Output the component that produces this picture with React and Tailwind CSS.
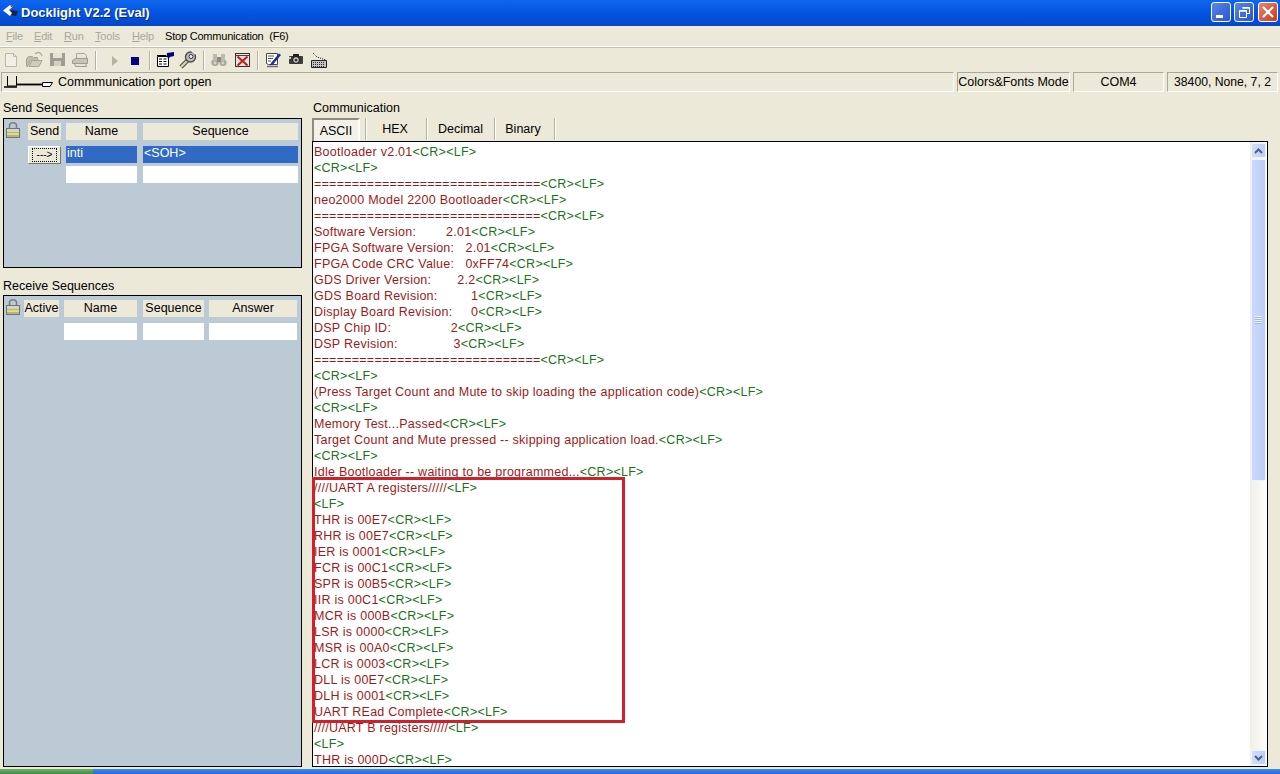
const R = "text-[#9c1a1a]";
const G = "text-[#187418]";

const LINES = [
  ["Bootloader v2.01", "<CR><LF>"],
  ["", "<CR><LF>"],
  ["==============================", "<CR><LF>"],
  ["neo2000 Model 2200 Bootloader", "<CR><LF>"],
  ["==============================", "<CR><LF>"],
  ["Software Version:        2.01", "<CR><LF>"],
  ["FPGA Software Version:   2.01", "<CR><LF>"],
  ["FPGA Code CRC Value:   0xFF74", "<CR><LF>"],
  ["GDS Driver Version:       2.2", "<CR><LF>"],
  ["GDS Board Revision:         1", "<CR><LF>"],
  ["Display Board Revision:     0", "<CR><LF>"],
  ["DSP Chip ID:                2", "<CR><LF>"],
  ["DSP Revision:               3", "<CR><LF>"],
  ["==============================", "<CR><LF>"],
  ["", "<CR><LF>"],
  ["(Press Target Count and Mute to skip loading the application code)", "<CR><LF>"],
  ["", "<CR><LF>"],
  ["Memory Test...Passed", "<CR><LF>"],
  ["Target Count and Mute pressed -- skipping application load.", "<CR><LF>"],
  ["", "<CR><LF>"],
  ["Idle Bootloader -- waiting to be programmed...", "<CR><LF>"],
  ["////UART A registers/////", "<LF>"],
  ["", "<LF>"],
  ["THR is 00E7", "<CR><LF>"],
  ["RHR is 00E7", "<CR><LF>"],
  ["IER is 0001", "<CR><LF>"],
  ["FCR is 00C1", "<CR><LF>"],
  ["SPR is 00B5", "<CR><LF>"],
  ["IIR is 00C1", "<CR><LF>"],
  ["MCR is 000B", "<CR><LF>"],
  ["LSR is 0000", "<CR><LF>"],
  ["MSR is 00A0", "<CR><LF>"],
  ["LCR is 0003", "<CR><LF>"],
  ["DLL is 00E7", "<CR><LF>"],
  ["DLH is 0001", "<CR><LF>"],
  ["UART REad Complete", "<CR><LF>"],
  ["////UART B registers/////", "<LF>"],
  ["", "<LF>"],
  ["THR is 000D", "<CR><LF>"],
];

function Lock() {
  return (
    <svg width="14" height="16" viewBox="0 0 14 16" className="block">
      <path d="M3.5 6.5V4C3.5 2 5 .8 7 .8S10.5 2 10.5 4v2.5" fill="none" stroke="#7e7e78" strokeWidth="1.6" />
      <rect x=".5" y="6.5" width="13" height="9" fill="#b0b0a8" stroke="#74746c" />
      <rect x="1" y="7" width="12" height="3" fill="#d4d4cc" />
      <rect x="1" y="11" width="12" height="2" fill="#e4e44c" />
    </svg>
  );
}

function HCell({ w, children }) {
  return (
    <div className={`${w} h-[17px] bg-[#ece9d8] flex items-center justify-center text-black whitespace-nowrap`}>{children}</div>
  );
}

function Icon({ children, w = 23 }) {
  return (
    <svg width={w} height="20" viewBox={`0 0 ${w} 20`} className="shrink-0 block">
      {children}
    </svg>
  );
}

const Sep = () => <div className="w-[1px] h-[19px] ml-[3px] mr-[1px] bg-[#b4b1a2] [box-shadow:1px_0_0_#fff]" />;

function Toolbar() {
  return (
    <div className="h-[24px] shrink-0 flex items-center">
      <Icon>
        <path d="M5.5 3.5h8l3 3v10h-11z" fill="#f2f0e4" stroke="#bab8aa" />
        <path d="M13.5 3.5v3h3" fill="none" stroke="#bab8aa" />
      </Icon>
      <Icon>
        <path d="M3.5 8.5l2-2h4l1 1h4v3h-7l-3 6h-1z" fill="#bdbbac" stroke="#a8a698" />
        <path d="M6 16.5l3-6h10l-3 6z" fill="#cfcdbe" stroke="#a8a698" />
        <path d="M12 4c2-2 5-2 6 0l1 2" fill="none" stroke="#b0ae9f" strokeWidth="1.4" />
      </Icon>
      <Icon>
        <rect x="4" y="3" width="15" height="13" fill="#a09e91" />
        <rect x="7" y="3" width="9" height="5" fill="#e6e4d8" />
        <rect x="8" y="11" width="7" height="5" fill="#d2d0c2" />
      </Icon>
      <Icon>
        <path d="M7.5 3.5h8l2 2v4h-10z" fill="#e9e7da" stroke="#a8a698" />
        <path d="M3.5 10.5l3-2h12v5h-15z" fill="#c6c4b6" stroke="#9e9c8e" />
        <path d="M5.5 13.5h11l1 3h-11z" fill="#e4e2d6" stroke="#a09e90" />
      </Icon>
      <Sep />
      <Icon w={26}>
        <path d="M15 6l6 5-6 5z" fill="#b5b3a6" />
      </Icon>
      <Icon>
        <rect x="8" y="7" width="8" height="8" fill="#000080" />
      </Icon>
      <Sep />
      <Icon w={26}>
        <path d="M6.5 6.5h11v10h-11z" fill="#fff" stroke="#000" />
        <path d="M6 5.5h9M8 9h3M8 11.5h3M8 14h3M12.5 9h3M12.5 11.5h3M12.5 14h3" stroke="#000" />
        <path d="M16 3l7-1v4l-4 1-2 2-.5-2-1-.5z" fill="#000080" />
      </Icon>
      <Icon>
        <path d="M4 17l8-8" stroke="#4a4536" strokeWidth="4.4" />
        <path d="M4 17l8-8" stroke="#d8d2b0" strokeWidth="2.4" />
        <circle cx="13.5" cy="7" r="5" fill="#bdbdbd" stroke="#4a4a4a" strokeWidth="1.4" />
        <circle cx="14" cy="6.5" r="2" fill="#f2f2f2" stroke="#333" />
        <path d="M15 1l3.5 3" stroke="#ece9d8" strokeWidth="2" />
      </Icon>
      <Sep />
      <Icon w={26}>
        <circle cx="10" cy="12.5" r="3.6" fill="#a9a799" />
        <circle cx="18" cy="12.5" r="3.6" fill="#a9a799" />
        <rect x="8" y="4" width="4" height="7" fill="#bcbaac" />
        <rect x="16" y="4" width="4" height="7" fill="#bcbaac" />
        <rect x="12" y="7" width="4" height="5" fill="#8e8c7e" />
        <circle cx="10" cy="13" r="1.4" fill="#d8d6c8" />
        <circle cx="18" cy="13" r="1.4" fill="#d8d6c8" />
      </Icon>
      <Icon>
        <rect x="4.5" y="3.5" width="14" height="13" fill="#efe3dc" stroke="#333" />
        <path d="M4.5 5.5h14" stroke="#444" />
        <path d="M6.5 6.5l10 9M16.5 6.5l-10 9" stroke="#c02020" strokeWidth="2.2" />
      </Icon>
      <Sep />
      <Icon w={26}>
        <path d="M7.5 3.5h11v11h-9l-2-1z" fill="#fff" stroke="#444" />
        <path d="M9 6h6M9 8.5h5M9 11h3" stroke="#555" />
        <path d="M12 13l8-9.5 2 1.5-8 9.5-3 1z" fill="#1c2e90" />
        <path d="M8 16.5h11" stroke="#6a6a6a" strokeWidth="1.4" />
      </Icon>
      <Icon w={22}>
        <rect x="4" y="6" width="14" height="8" rx="1" fill="#3c3c3c" />
        <rect x="8" y="4" width="6" height="3" fill="#1e1e1e" />
        <circle cx="11" cy="10" r="3.4" fill="#d8d8d8" stroke="#000" />
        <circle cx="11" cy="10" r="1.5" fill="#333" />
        <rect x="4" y="7" width="2" height="2" fill="#c8c8c8" />
      </Icon>
      <Icon w={24}>
        <path d="M6 3l2 2 2 2 3 1 3 1 3 1" fill="none" stroke="#333" strokeDasharray="1.2 1" />
        <path d="M4.5 10.5h15v7h-15z" fill="#c4c4c0" stroke="#222" />
        <path d="M6 12.5h12M6 14.5h12M6 16.5h12" stroke="#333" strokeDasharray="1 1" />
      </Icon>
    </div>
  );
}

function WinBtn({ className, children }) {
  return (
    <div className={`w-[20px] h-[20px] rounded-[3px] border border-white flex items-center justify-center ${className}`}>
      {children}
    </div>
  );
}

const Grip = () => <div className="w-[7px] h-[2px] bg-[#eef3fe] border-b border-[#a4b8e4]" />;

const SBox = "border border-t-[#aca899] border-l-[#aca899] border-r-white border-b-white";

export default function App() {
  return (
    <div
      className="w-[1280px] h-[774px] overflow-hidden bg-[#ece9d8] flex flex-col text-[12.5px] text-black relative"
      style={{ fontFamily: '"Liberation Sans", Arial, sans-serif' }}
    >
      {/* Title bar */}
      <div className="h-[26px] shrink-0 flex items-center bg-gradient-to-b from-[#0f66ec] via-[#0454e0] to-[#0348c8] pl-[3px] pr-[2px]">
        <svg width="16" height="14" viewBox="0 0 16 14" className="shrink-0 mb-[3px]">
          <path d="M8 5l7 1-2 5-6-1z" fill="#1c2440" />
          <path d="M0 5.5L7 0l3 1.6L6 5l3 3-2 3z" fill="#fff" />
          <path d="M7 0l3 1.6-1.6 1z" fill="#d02030" />
        </svg>
        <span className="ml-[2px] text-white font-bold text-[13px] [text-shadow:1px_1px_0_#0a2a80]">
          Docklight V2.2 (Eval)
        </span>
        <div className="flex-1" />
        <div className="flex mb-[2px]">
          <WinBtn className="bg-gradient-to-br from-[#5a85e8] to-[#2a55d0]">
            <div className="w-[7px] h-[3px] bg-white mt-[9px] -ml-[4px]" />
          </WinBtn>
          <div className="w-[3px]" />
          <WinBtn className="bg-gradient-to-br from-[#5a85e8] to-[#2a55d0]">
            <svg width="13" height="13" viewBox="0 0 13 13">
              <path d="M4.5 1.5h7v6h-3M1.5 4.5h7v7h-7z" fill="none" stroke="#fff" />
              <path d="M1.5 5h7M4.5 2h7" stroke="#fff" strokeWidth="1.5" />
            </svg>
          </WinBtn>
          <div className="w-[4px]" />
          <WinBtn className="bg-gradient-to-br from-[#e8866a] to-[#c23a18]">
            <svg width="14" height="14" viewBox="0 0 14 14">
              <path d="M2 2l10 10M12 2L2 12" stroke="#fff" strokeWidth="2.2" />
            </svg>
          </WinBtn>
        </div>
      </div>

      {/* Menu */}
      <div className="h-[20px] shrink-0 flex items-center pl-[6px] text-[11px] tracking-[-0.2px] text-[#a9a79b]">
        <span className="w-[28px]"><u>F</u>ile</span>
        <span className="w-[30px]"><u>E</u>dit</span>
        <span className="w-[31px]"><u>R</u>un</span>
        <span className="w-[37px]"><u>T</u>ools</span>
        <span className="w-[33px]"><u>H</u>elp</span>
        <span className="text-black whitespace-pre">Stop Communication  (F6)</span>
      </div>
      <div className="h-[1px] shrink-0 bg-white" />
      <div className="h-[1px] shrink-0 bg-[#c4c1b0]" />

      <Toolbar />

      {/* Status */}
      <div className="h-[20px] shrink-0 flex items-center gap-[3px] pl-[1px]">
        <div className={`w-[953px] h-[20px] flex items-center ${SBox}`}>
          <svg width="50" height="14" viewBox="0 0 50 14" className="ml-[2px] shrink-0">
            <path d="M3.5 1v10h9V1" fill="none" stroke="#000" />
            <path d="M0 12h13" stroke="#000" strokeWidth="1.5" />
            <path d="M12 9.5h26" stroke="#000" strokeWidth="1.8" />
            <path d="M38.5 7.5h10l-2.5 4h-7.5z" fill="#fff" stroke="#000" />
          </svg>
          <span className="ml-[4px] whitespace-nowrap">Commmunication port open</span>
        </div>
        <div className={`w-[113px] h-[20px] flex items-center justify-center whitespace-nowrap ${SBox}`}>Colors&amp;Fonts Mode</div>
        <div className={`w-[91px] h-[20px] flex items-center justify-center ${SBox}`}>COM4</div>
        <div className={`w-[111px] h-[20px] flex items-center justify-center text-[12.2px] ${SBox}`}>38400, None, 7, 2</div>
      </div>

      {/* Main */}
      <div className="flex-1 min-h-0 flex pl-[3px] pr-[12px]">
        <div className="w-[299px] shrink-0 flex flex-col">
          <div className="h-[26px] flex items-end pb-[2px] leading-[16px]">Send Sequences</div>
          <div className="h-[150px] shrink-0 border border-black bg-[#bccad6] pl-[2px] pr-[3px] pt-[3px]">
            <div className="flex">
              <div className="w-[22px] shrink-0"><Lock /></div>
              <div className="flex mt-[1px]">
                <HCell w="w-[33px]">Send</HCell>
                <div className="w-[5px]" />
                <HCell w="w-[71px]">Name</HCell>
                <div className="w-[6px]" />
                <HCell w="w-[155px]">Sequence</HCell>
              </div>
            </div>
            <div className="flex mt-[6px] pl-[22px]">
              <div className="w-[33px] h-[18px] bg-[#ece9d8] border border-t-white border-l-white border-r-[#77766b] border-b-[#77766b] flex items-center justify-center">
                <div className="w-[25px] h-[14px] border border-dotted border-black text-[10px] leading-[11px] text-center">---&gt;</div>
              </div>
              <div className="w-[5px]" />
              <div className="flex flex-col gap-[3px]">
                <div className="flex gap-[6px]">
                  <div className="w-[71px] h-[17px] bg-[#316ac5] text-white pl-[1px] leading-[15px]">inti</div>
                  <div className="w-[155px] h-[17px] bg-[#316ac5] text-white pl-[1px] leading-[15px]">&lt;SOH&gt;</div>
                </div>
                <div className="flex gap-[6px]">
                  <div className="w-[71px] h-[17px] bg-white" />
                  <div className="w-[155px] h-[17px] bg-white" />
                </div>
              </div>
            </div>
          </div>
          <div className="h-[27px] shrink-0 flex items-end leading-[18px]">Receive Sequences</div>
          <div className="h-[472px] shrink-0 border border-black bg-[#bccad6] pl-[2px] pt-[3px]">
            <div className="flex">
              <div className="w-[18px] shrink-0"><Lock /></div>
              <div className="flex mt-[1px]">
                <HCell w="w-[35px]">Active</HCell>
                <div className="w-[5px]" />
                <HCell w="w-[73px]">Name</HCell>
                <div className="w-[6px]" />
                <HCell w="w-[61px]">Sequence</HCell>
                <div className="w-[5px]" />
                <HCell w="w-[88px]">Answer</HCell>
              </div>
            </div>
            <div className="flex mt-[6px] pl-[58px]">
              <div className="w-[73px] h-[17px] bg-white" />
              <div className="w-[6px]" />
              <div className="w-[61px] h-[17px] bg-white" />
              <div className="w-[5px]" />
              <div className="w-[88px] h-[17px] bg-white" />
            </div>
          </div>
        </div>

        <div className="w-[956px] shrink-0 ml-[10px] flex flex-col">
          <div className="h-[26px] shrink-0 flex items-end pb-[2px] pl-[1px] leading-[16px]">Communication</div>
          {/* Tabs */}
          <div className="h-[23px] shrink-0 flex">
            <div className="w-[48px] h-[23px] flex items-center justify-center pt-[2px] border-2 border-t-[#8e8c80] border-l-[#8e8c80] border-r-white border-b-0 bg-[#f4f2e8]">ASCII</div>
            <div className="w-[1px] h-[22px] ml-[5px] bg-[#b4b1a2] [box-shadow:1px_0_0_#fff]" />
            <div className="w-[60px] h-[22px] pr-[2px] flex items-center justify-center">HEX</div>
            <div className="w-[1px] h-[22px] bg-[#b4b1a2] [box-shadow:1px_0_0_#fff]" />
            <div className="w-[67px] h-[22px] flex items-center justify-center">Decimal</div>
            <div className="w-[1px] h-[22px] bg-[#b4b1a2] [box-shadow:1px_0_0_#fff]" />
            <div className="w-[59px] h-[22px] pr-[3px] flex items-center justify-center">Binary</div>
            <div className="w-[1px] h-[22px] bg-[#b4b1a2] [box-shadow:1px_0_0_#fff]" />
          </div>
          {/* Log */}
          <div className="flex-1 min-h-0 border border-black bg-white flex relative">
            <div className="flex-1 min-w-0 overflow-hidden pl-[1px] pt-[2px] tracking-[0.25px]">
              {LINES.map(([a, b], i) => (
                <div key={i} className="h-[16px] leading-[16px] whitespace-pre">
                  <span className={R}>{a}</span>
                  <span className={G}>{b}</span>
                </div>
              ))}
            </div>
            {/* Scrollbar */}
            <div className="w-[17px] shrink-0 bg-gradient-to-r from-[#f0efe8] to-[#fdfdfa] flex flex-col items-center py-[1px]">
              <div className="w-[15px] h-[15px] rounded-[2px] bg-gradient-to-r from-[#d2defa] to-[#bccff6] border border-[#eef2fd] flex items-center justify-center">
                <svg width="9" height="6" viewBox="0 0 9 6">
                  <path d="M1 5l3.5-3.5L8 5" fill="none" stroke="#4d6185" strokeWidth="2" />
                </svg>
              </div>
              <div className="w-[15px] h-[322px] mt-[1px] rounded-[2px] bg-gradient-to-r from-[#cbd8fb] to-[#bccff8] border border-[#eef2fd] flex flex-col items-center justify-center">
                <Grip />
                <Grip />
                <Grip />
                <Grip />
              </div>
              <div className="flex-1" />
              <div className="w-[15px] h-[15px] rounded-[2px] bg-gradient-to-r from-[#d2defa] to-[#bccff6] border border-[#eef2fd] flex items-center justify-center">
                <svg width="9" height="6" viewBox="0 0 9 6">
                  <path d="M1 1l3.5 3.5L8 1" fill="none" stroke="#4d6185" strokeWidth="2" />
                </svg>
              </div>
            </div>
          </div>
        </div>
      </div>

      {/* Bottom sliver of taskbar */}
      <div className="h-[5px] mt-[2px] shrink-0 flex bg-gradient-to-b from-[#3a8ee8] to-[#2a6ad8]">
        <div className="w-[93px] bg-gradient-to-b from-[#6fb06f] to-[#3f8f3f]" />
      </div>

      {/* Red annotation */}
      <div className="absolute left-[312px] top-[477px] w-[313px] h-[246px] border-[3px] border-[#d0202c] pointer-events-none" />
    </div>
  );
}
